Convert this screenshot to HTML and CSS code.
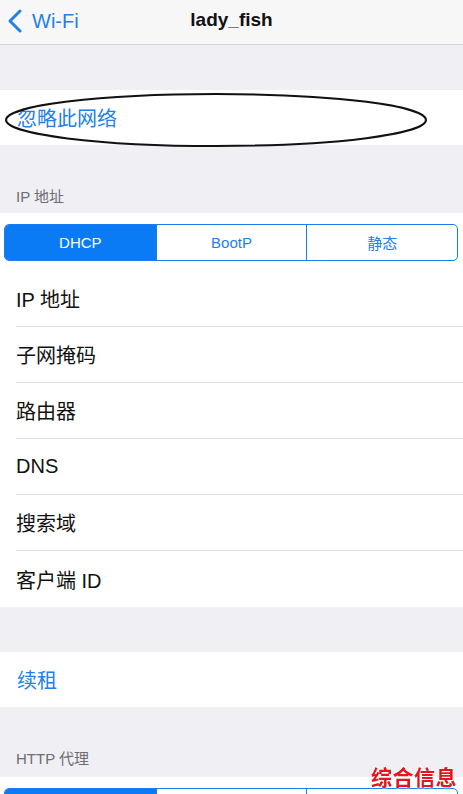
FILE: index.html
```html
<!DOCTYPE html>
<html lang="zh-CN">
<head>
    <meta charset="UTF-8">
    <meta name="viewport" content="width=device-width, initial-scale=1.0">
    <title>lady_fish</title>
    <link rel="stylesheet" href="styles.css">
</head>
<body>

    <header class="nav-bar">
        <a class="back-link" href="#">
            <svg class="back-chevron" width="16" height="24" viewBox="0 0 16 24">
                <path d="M13 2 L3 12 L13 22" fill="none" stroke="currentColor" stroke-width="3" stroke-linecap="round" stroke-linejoin="round"/>
            </svg>
            <span>Wi-Fi</span>
        </a>
        <h1 class="nav-title">lady_fish</h1>
    </header>

    <div class="spacer"></div>

    <div class="group">
        <div class="row row-action forget-row">
            忽略此网络
            <svg class="scribble" width="426" height="58" viewBox="0 0 426 58">
                <ellipse cx="212" cy="29" rx="210" ry="26" fill="none" stroke="#111" stroke-width="2"/>
            </svg>
        </div>
    </div>

    <div class="section-label">IP 地址</div>

    <div class="group">
        <div class="segment-wrap">
            <div class="segmented">
                <span class="segment active">DHCP</span>
                <span class="segment">BootP</span>
                <span class="segment">静态</span>
            </div>
        </div>
        <div class="row">IP 地址</div>
        <div class="row">子网掩码</div>
        <div class="row">路由器</div>
        <div class="row">DNS</div>
        <div class="row">搜索域</div>
        <div class="row">客户端 ID</div>
    </div>

    <div class="spacer"></div>

    <div class="group">
        <div class="row row-action">续租</div>
    </div>

    <div class="section-label section-label-tall">HTTP 代理</div>

    <div class="group">
        <div class="segment-wrap">
            <!-- only the top edge of this control is on screen -->
            <div class="segmented">
                <span class="segment active"></span>
                <span class="segment"></span>
                <span class="segment"></span>
            </div>
        </div>
    </div>

    <div class="watermark">综合信息</div>

</body>
</html>
```

FILE: styles.css
```css
/* General */
body {
    margin: 0;
    padding: 0;
    background-color: #efeff4;
    font-family: 'Liberation Sans', 'Noto Sans CJK SC', sans-serif;
    color: #111;
    overflow: hidden;
}

/* Navigation bar */
.nav-bar {
    height: 44px;
    background-color: #f7f7f8;
    border-bottom: 1px solid #d6d6da;
    display: flex;
    align-items: center;
    justify-content: center;
    position: relative;
}

.back-link {
    position: absolute; /* sits over the centred title bar */
    left: 7px;
    top: 9px;
    display: flex;
    align-items: center;
    gap: 9px;
    color: #2180ea;
    text-decoration: none;
    font-size: 20px;
}

.back-chevron {
    display: block;
}

.nav-title {
    margin: 0;
    font-size: 19px;
    font-weight: 700;
    color: #111;
    padding-bottom: 5px;
}

.spacer {
    height: 45px;
}

/* Groups and rows */
.group {
    background-color: #fff;
}

.row {
    height: 56px;
    margin-left: 16px;
    display: flex;
    align-items: center;
    font-size: 20px;
    border-bottom: 1px solid #e3e3e6;
    box-sizing: border-box;
}

.row:last-child {
    border-bottom: none;
}

.row-action {
    color: #2180ea;
    margin-left: 0;
    padding-left: 17px;
    height: 55px;
}

.forget-row {
    position: relative;
}

.scribble {
    position: absolute; /* hand-drawn mark over the row */
    left: 4px;
    top: 1px;
}

/* Section headers */
.section-label {
    height: 68px;
    box-sizing: border-box;
    display: flex;
    align-items: flex-end;
    padding: 0 16px 7px;
    font-size: 15px;
    color: #6d6d72;
}

.section-label-tall {
    height: 70px;
    padding-bottom: 9px;
}

/* Segmented control */
.segment-wrap {
    padding: 11px 5px 10px 4px;
}

.segmented {
    display: grid;
    grid-template-columns: 1fr 1fr 1fr;
    height: 37px;
    border: 1px solid #1a7cf0;
    border-radius: 5px;
    overflow: hidden;
    box-sizing: border-box;
}

.segment {
    display: flex;
    align-items: center;
    justify-content: center;
    font-size: 15px;
    color: #2180ea;
    border-left: 1px solid #1a7cf0;
}

.segment:first-child {
    border-left: none;
}

.segment.active {
    background-color: #0a7bf5;
    color: #fff;
}

/* Watermark */
.watermark {
    position: fixed; /* stamped over the screenshot */
    right: 6px;
    bottom: 3px;
    font-size: 21px;
    font-weight: 700;
    color: #e3161c;
    letter-spacing: 0.5px;
    text-shadow: 0 0 2px #fff, 0 0 2px #fff;
}
```
